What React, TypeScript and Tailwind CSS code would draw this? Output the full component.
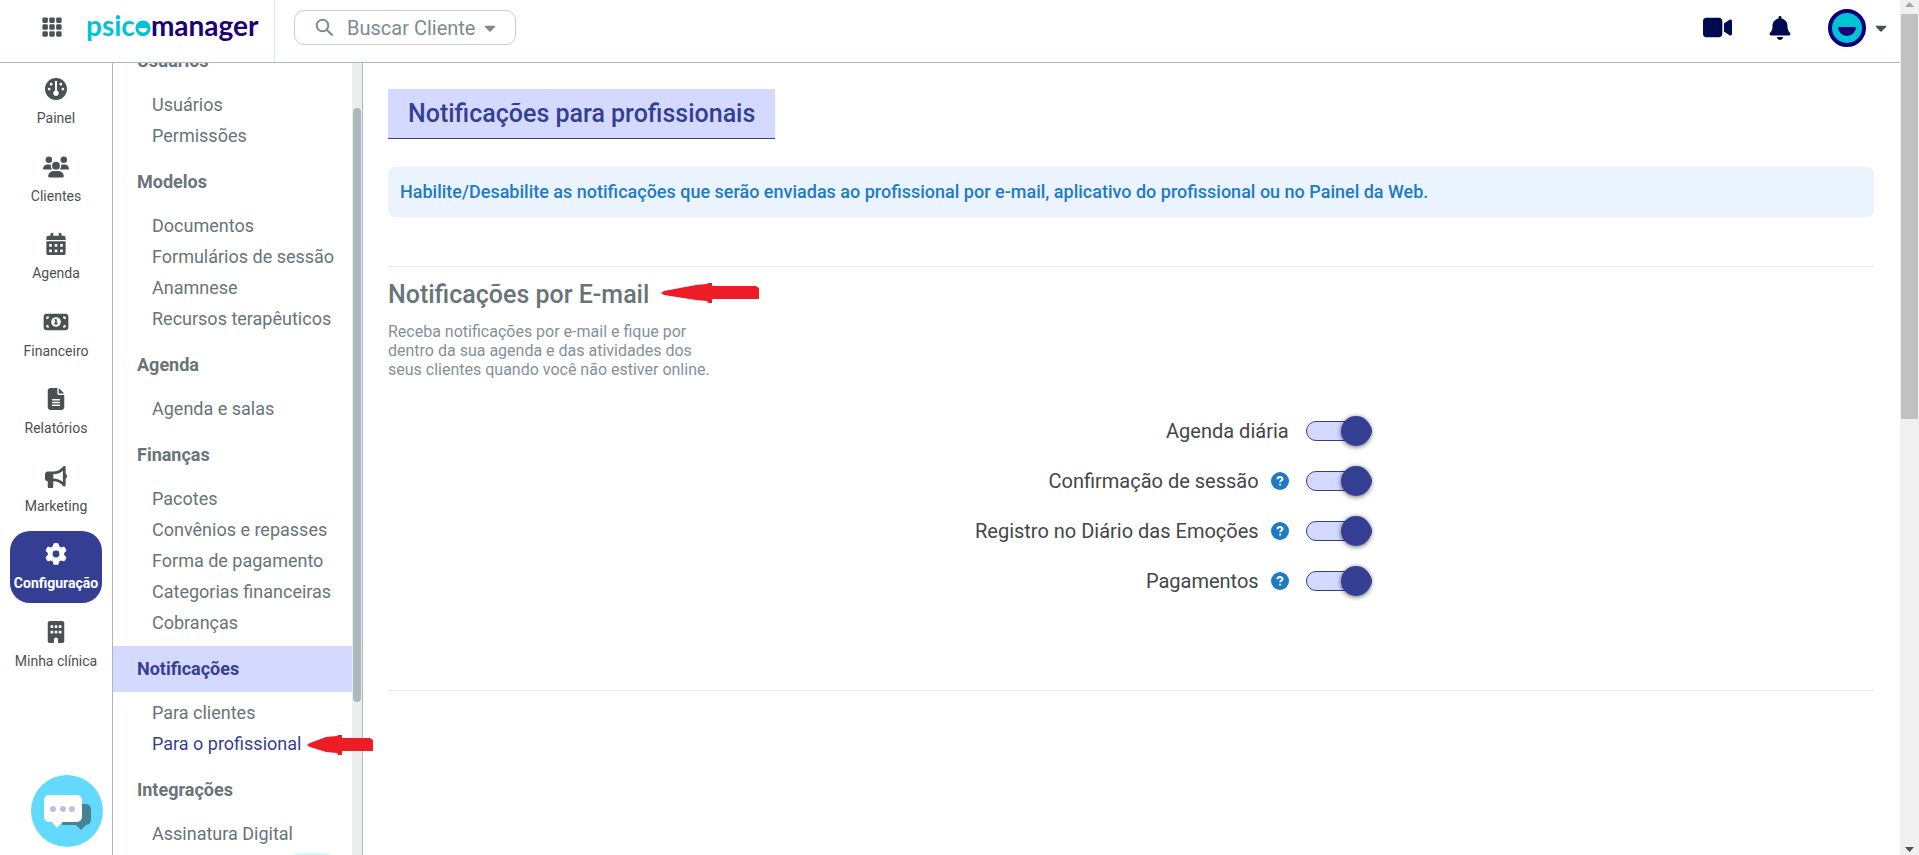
import React, { useState } from 'react';
import { BsGrid3X3GapFill } from 'react-icons/bs';
import { FaCalendarAlt, FaCaretDown } from 'react-icons/fa';
import {
  FaBell,
  FaBuilding,
  FaBullhorn,
  FaFileLines,
  FaGauge,
  FaGear,
  FaMoneyBill1,
  FaUsers,
  FaVideo
} from 'react-icons/fa6';

interface NavItem {
  label: string;
  icon: React.ComponentType<{ className?: string }>;
  active?: boolean;
}

interface MenuGroup {
  title: string;
  items: string[];
}

interface Toggle {
  id: string;
  label: string;
  help?: boolean;
}

const navItems: NavItem[] = [
  { label: 'Painel', icon: FaGauge },
  { label: 'Clientes', icon: FaUsers },
  { label: 'Agenda', icon: FaCalendarAlt },
  { label: 'Financeiro', icon: FaMoneyBill1 },
  { label: 'Relatórios', icon: FaFileLines },
  { label: 'Marketing', icon: FaBullhorn },
  { label: 'Configuração', icon: FaGear, active: true },
  { label: 'Minha clínica', icon: FaBuilding }
];

const menuGroups: MenuGroup[] = [
  { title: 'Usuários', items: ['Usuários', 'Permissões'] },
  { title: 'Modelos', items: ['Documentos', 'Formulários de sessão', 'Anamnese', 'Recursos terapêuticos'] },
  { title: 'Agenda', items: ['Agenda e salas'] },
  {
    title: 'Finanças',
    items: ['Pacotes', 'Convênios e repasses', 'Forma de pagamento', 'Categorias financeiras', 'Cobranças']
  },
  { title: 'Notificações', items: ['Para clientes', 'Para o profissional'] },
  { title: 'Integrações', items: ['Assinatura Digital'] }
];

const toggles: Toggle[] = [
  { id: 'agenda', label: 'Agenda diária' },
  { id: 'sessao', label: 'Confirmação de sessão', help: true },
  { id: 'emocoes', label: 'Registro no Diário das Emoções', help: true },
  { id: 'pagamentos', label: 'Pagamentos', help: true }
];

const Logo: React.FC = () => (
  <a href="#" className="flex font-['Lato',sans-serif] text-[28px] leading-9 font-bold text-[#1b0079]">
    <span className="text-[#00c4d4]">psic</span>
    <span className="relative text-[#00c4d4]">
      o
      <svg className="absolute top-[13px] left-0" width="16" height="16" viewBox="0 0 16 16">
        <circle cx="8" cy="8" r="7.500" fill="#00c4d4" />
        <path d="M3.500 8h9a4.500 4.500 0 0 1-9 0z" fill="#fff" />
      </svg>
    </span>
    <span>manager</span>
  </a>
);

const Header: React.FC = () => (
  <header className="relative z-10 flex h-[63px] shrink-0 border-b border-[#adb8bd] bg-white">
    <div className="flex w-[275px] shrink-0 items-start border-r border-[#e3e6e8] pl-[41px]">
      <button type="button" aria-label="Aplicativos" className="mt-4 mr-[23px] text-[#4a5153]">
        <BsGrid3X3GapFill className="size-[22px]" />
      </button>
      <div className="mt-[7px]">
        <Logo />
      </div>
    </div>
    <button
      type="button"
      className="mt-[10px] ml-[19px] flex h-[35px] w-[222px] items-center rounded-[10px] border border-[#c8cccf] pl-5 text-xl text-[#7c8b92]"
    >
      <svg className="mr-3 size-5" viewBox="0 0 20 20" fill="none" stroke="currentColor" strokeWidth="2">
        <circle cx="7.500" cy="7.500" r="5.800" />
        <path d="M11.700 11.700L17.500 17.500" />
      </svg>
      Buscar Cliente
      <FaCaretDown className="ml-[6px] size-[18px]" />
    </button>
    <div className="ml-auto flex h-[55px] items-center pr-[10px] text-[#000a50]">
      <button type="button" aria-label="Videochamada" className="mr-9">
        <FaVideo className="size-[29px]" />
      </button>
      <button type="button" aria-label="Avisos" className="mr-9">
        <FaBell className="size-6" />
      </button>
      <button type="button" aria-label="Minha conta" className="flex items-center gap-[6px]">
        <svg width="38" height="38" viewBox="0 0 38 38">
          <circle cx="19" cy="19" r="17" fill="#00c4d4" stroke="#00007c" strokeWidth="4" />
          <path d="M10 18h18a9 9 0 0 1-18 0z" fill="#1b0079" />
        </svg>
        <FaCaretDown className="size-[18px] text-[#4a5153]" />
      </button>
    </div>
  </header>
);

const Sidebar: React.FC = () => (
  <nav className="w-[113px] shrink-0 border-r border-[#adb8bd] px-[10px] pt-[3px]">
    <ul className="flex h-[615px] flex-col justify-between">
      {navItems.map(({ label, icon: Icon, active }) => (
        <li key={label}>
          <a
            href="#"
            className={`flex h-[72px] flex-col items-center rounded-[20px] pt-[11px] text-sm whitespace-nowrap ${
              active ? 'bg-[#343f93] font-bold text-white' : 'text-[#4a5153]'
            }`}
          >
            <Icon className="mb-[7px] h-6 w-[26px] py-px" />
            {label}
          </a>
        </li>
      ))}
    </ul>
  </nav>
);

const RedArrow: React.FC<{ width: number; head: number }> = ({ width, head }) => (
  <svg width={width} height="20" viewBox={`0 0 ${width} 20`} className="block">
    <path
      d={`M0 10L3 8L${head - 16} 2L${head - 5} 1L${head - 4} 0H${head}V3H${width - 3}L${width} 5V16H${head}V20H${head - 4}L${
        head - 5
      } 18L${head - 16} 17L3 12z`}
      fill="#ee1c24"
    />
  </svg>
);

const SubMenu: React.FC = () => (
  <aside className="relative flex w-[250px] shrink-0 border-r border-[#adb8bd]">
    <div className="flex-1 overflow-hidden">
      <div className="-mt-[25px]">
        {menuGroups.map(group => {
          const selected = group.title === 'Notificações';
          return (
            <section key={group.title}>
              <h3
                className={`flex h-[46px] items-center pl-6 text-lg font-bold ${
                  selected ? 'bg-[#d4daff] text-[#343f93]' : 'text-[#687478]'
                }`}
              >
                {group.title}
              </h3>
              <ul className="pt-[5px] pb-2">
                {group.items.map(item => (
                  <li key={item} className="flex h-[31px] items-center pl-[39px] text-lg whitespace-nowrap">
                    <a href="#" className={item === 'Para o profissional' ? 'text-[#343f93]' : 'text-[#687478]'}>
                      {item}
                    </a>
                  </li>
                ))}
                {group.title === 'Integrações' && (
                  <li className="flex h-[31px] items-start pt-1 pl-[179px]">
                    <span className="h-5 w-10 rounded-md bg-[#d0fbff]" />
                  </li>
                )}
              </ul>
            </section>
          );
        })}
      </div>
    </div>
    <div className="w-[10px] shrink-0 bg-[#eceeee] px-px pt-[45px]">
      <div className="h-[594px] rounded-full bg-[#adb8bd]" />
    </div>
    <div className="absolute top-[672px] left-[194px]">
      <RedArrow width={66} head={35} />
    </div>
  </aside>
);

const ToggleRow: React.FC<{ toggle: Toggle }> = ({ toggle }) => {
  const [checked, setChecked] = useState(true);

  return (
    <div className="flex h-[50px] items-center">
      <label htmlFor={toggle.id} className="text-xl text-[#424749]">
        {toggle.label}
      </label>
      {toggle.help && (
        <button type="button" aria-label="Ajuda" className="ml-3">
          <svg width="18" height="18" viewBox="0 0 18 18">
            <circle cx="9" cy="9" r="9" fill="#1f7ac6" />
            <path
              d="M6.500 7.200C6.500 4.400 11.500 4.500 11.500 7C11.500 8.600 9.100 8.500 9.100 10.300M9.100 11.800V13.600"
              fill="none"
              stroke="#fff"
              strokeWidth="2"
            />
          </svg>
        </button>
      )}
      <input
        id={toggle.id}
        type="checkbox"
        checked={checked}
        onChange={e => setChecked(e.target.checked)}
        className="ml-[17px] flex h-5 w-[66px] appearance-none items-center rounded-full border border-[#343f93] bg-[#d4daff] after:size-[30px] after:shrink-0 after:rounded-full after:bg-[#343f93] after:shadow-[0_1px_5px_rgba(0,0,0,0.6)] checked:justify-end"
      />
    </div>
  );
};

const PageScrollbar: React.FC = () => (
  <div className="flex w-[19px] shrink-0 flex-col items-center bg-[#f0f0f0]">
    <svg width="19" height="14" viewBox="0 0 19 14">
      <path d="M5 7L9.500 2L14 7z" fill="#a3a3a3" />
    </svg>
    <div className="h-[405px] w-[17px] bg-[#c1c1c1]" />
    <svg className="mt-auto" width="19" height="14" viewBox="0 0 19 14">
      <path d="M5 6L9.500 11L14 6z" fill="#505050" />
    </svg>
  </div>
);

const App: React.FC = () => {
  return (
    <div className="flex h-screen overflow-hidden bg-white font-['Roboto',sans-serif]">
      <div className="flex min-w-0 flex-1 flex-col">
        <Header />
        <div className="flex min-h-0 flex-1">
          <Sidebar />
          <SubMenu />
          <main className="min-w-0 flex-1 overflow-hidden pt-[26px] pr-[26px] pl-[25px]">
            <h1 className="flex h-[50px] w-fit items-center border-b border-[#343f93] bg-[#d4daff] px-5 pt-px text-[25px] font-medium text-[#343f93]">
              Notificações para profissionais
            </h1>
            <p className="mt-7 flex min-h-[50px] items-center rounded-md bg-[#ebf4fe] px-3 text-lg font-medium text-[#1f7ac6]">
              Habilite/Desabilite as notificações que serão enviadas ao profissional por e-mail, aplicativo do
              profissional ou no Painel da Web.
            </p>
            <section className="mt-[49px] border-y border-[#e6e8e9] pt-3 pb-[84px]">
              <div className="flex items-start gap-3">
                <h2 className="text-[25px] leading-8 font-medium text-[#687478]">Notificações por E-mail</h2>
                <div className="pt-1">
                  <RedArrow width={98} head={51} />
                </div>
              </div>
              <p className="mt-[11px] w-[340px] leading-[19px] text-[#84919a]">
                Receba notificações por e-mail e fique por dentro da sua agenda e das atividades dos seus clientes
                quando você não estiver online.
              </p>
              <div className="mt-[27px] flex w-2/3 flex-col items-end pr-[7px]">
                {toggles.map(toggle => (
                  <ToggleRow key={toggle.id} toggle={toggle} />
                ))}
              </div>
            </section>
          </main>
        </div>
      </div>
      <PageScrollbar />

      {/* Chat de suporte */}
      <button type="button" aria-label="Abrir chat" className="fixed bottom-2 left-[31px] z-20">
        <svg width="72" height="72" viewBox="0 0 72 72">
          <circle cx="36" cy="36" r="36" fill="#62d9fd" />
          <path d="M36 29h19a5 5 0 0 1 5 5v11a5 5 0 0 1-5 5l-5 5-5-5H31z" fill="#478395" />
          <path d="M18 20h28a5 5 0 0 1 5 5v17a5 5 0 0 1-5 5H31l-5 6-5-6h-3a5 5 0 0 1-5-5V25a5 5 0 0 1 5-5z" fill="#fff" />
          <circle cx="22" cy="34" r="3" fill="#b9c4da" />
          <circle cx="32" cy="34" r="3" fill="#b9c4da" />
          <circle cx="41" cy="34" r="3" fill="#b9c4da" />
        </svg>
      </button>
    </div>
  );
};

export default App;
